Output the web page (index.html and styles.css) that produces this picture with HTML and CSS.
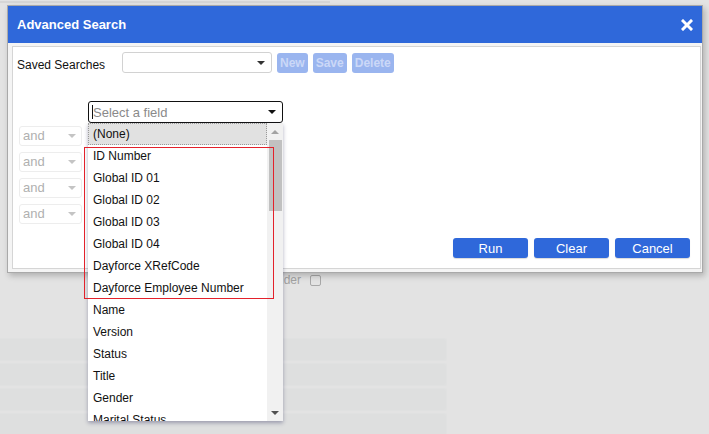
FILE: index.html
```html
<!DOCTYPE html>
<html lang="en">
<head>
    <meta charset="UTF-8">
    <title>Advanced Search</title>
    <link rel="stylesheet" href="styles.css">
</head>
<body>
    <div class="page">
        <div class="page-rule"></div>
        <div class="page-gender">
            <span>Gender</span>
            <span class="page-check"></span>
        </div>
        <div class="page-fields">
            <div class="page-field"></div>
            <div class="page-field"></div>
            <div class="page-field"></div>
            <div class="page-field"></div>
        </div>
    </div>

    <div class="modal">
        <div class="modal-title">
            <span>Advanced Search</span>
            <svg class="modal-close" width="12" height="12" viewBox="0 0 12 12">
                <path d="M2 2 L10 10 M10 2 L2 10" stroke="#fff" stroke-width="3" stroke-linecap="square"/>
            </svg>
        </div>
        <div class="modal-body">
            <div class="saved-row">
                <label class="saved-label">Saved Searches</label>
                <div class="saved-select"><span class="caret dark"></span></div>
                <button class="btn-light">New</button>
                <button class="btn-light">Save</button>
                <button class="btn-light">Delete</button>
            </div>

            <div class="field-row">
                <div class="field-wrap">
                    <div class="field-select">
                        <span class="cursor"></span>
                        <span class="placeholder">Select a field</span>
                        <span class="caret black"></span>
                    </div>
                    <div class="field-list">
                        <ul class="field-items">
                            <li class="active">(None)</li>
                            <li>ID Number</li>
                            <li>Global ID 01</li>
                            <li>Global ID 02</li>
                            <li>Global ID 03</li>
                            <li>Global ID 04</li>
                            <li>Dayforce XRefCode</li>
                            <li>Dayforce Employee Number</li>
                            <li>Name</li>
                            <li>Version</li>
                            <li>Status</li>
                            <li>Title</li>
                            <li>Gender</li>
                            <li>Marital Status</li>
                        </ul>
                        <div class="scrollbar">
                            <span class="scroll-up"></span>
                            <span class="scroll-thumb"></span>
                            <span class="scroll-track"></span>
                            <span class="scroll-down"></span>
                        </div>
                        <div class="highlight"></div>
                    </div>
                </div>
            </div>

            <div class="conditions">
                <div class="cond-select"><span>and</span><span class="caret pale"></span></div>
                <div class="cond-select"><span>and</span><span class="caret pale"></span></div>
                <div class="cond-select"><span>and</span><span class="caret pale"></span></div>
                <div class="cond-select"><span>and</span><span class="caret pale"></span></div>
            </div>

            <div class="actions">
                <button class="btn-blue">Run</button>
                <button class="btn-blue">Clear</button>
                <button class="btn-blue">Cancel</button>
            </div>
        </div>
    </div>
</body>
</html>
```

FILE: styles.css
```css
body {
    margin: 0;
    width: 709px;
    height: 434px;
    overflow: hidden;
    background-color: #e3e3e3;
    font-family: 'Liberation Sans', Arial, sans-serif;
    font-size: 12px;
    color: #111;
    position: relative;
}

/* faded page behind the dialog */
.page {
    display: flex;
    flex-direction: column;
}

.page-rule {
    margin-top: 1px;
    width: 330px;
    height: 2px;
    background-color: #d6d6d6;
}

.page-gender {
    display: flex;
    align-items: center;
    margin-top: 270px;
    padding-left: 261px;
    height: 14px;
    color: #a2a2a2;
    font-size: 12px;
}

.page-check {
    width: 9px;
    height: 9px;
    margin-left: 9px;
    border: 1px solid #a8a8a8;
    border-radius: 2px;
}

.page-fields {
    display: flex;
    flex-direction: column;
    gap: 2px;
    margin-top: 51px;
}

.page-field {
    width: 446px;
    height: 21px;
    background-color: #dedfdf;
    border: 1px solid #e0e1e1;
    border-left: none;
    border-radius: 0 3px 3px 0;
}

/* dialog */
.modal {
    position: absolute;
    left: 7px;
    top: 5px;
    width: 694px;
    height: 266px;
    border: 1px solid #a9a9a9;
    background-color: #f4f4f4;
    box-shadow: 2px 3px 6px rgba(0, 0, 0, 0.22);
    display: flex;
    flex-direction: column;
}

.modal-title {
    height: 37px;
    flex-shrink: 0;
    background-color: #2f68da;
    color: #fff;
    font-weight: bold;
    font-size: 13px;
    display: flex;
    align-items: center;
    justify-content: space-between;
    padding: 0 9px 0 9px;
}

.modal-close {
    display: block;
}

.modal-body {
    flex: 1;
    margin: 3px 1px 3px 4px;
    background-color: #fff;
    border: 1px solid #d5d5d5;
    padding: 5px 10px 10px 4px;
    display: flex;
    flex-direction: column;
}

.saved-row {
    display: flex;
    align-items: center;
    gap: 5px;
}

.saved-label {
    width: 100px;
    margin-top: 5px;
    font-size: 12px;
    color: #111;
}

.saved-select {
    position: relative;
    width: 148px;
    height: 19px;
    border: 1px solid #d2d2d2;
    border-radius: 3px;
}

.caret {
    position: absolute;
    top: 50%;
    width: 0;
    height: 0;
    margin-top: -2px;
    border-left: 4px solid transparent;
    border-right: 4px solid transparent;
    border-top: 4px solid #333;
}

.saved-select .caret {
    right: 6px;
}

.caret.black {
    border-top-color: #111;
    right: 6px;
}

.caret.pale {
    border-top-color: #c4c4c4;
    right: 5px;
}

.btn-light {
    height: 20px;
    padding: 0 3px;
    border: none;
    border-radius: 3px;
    background-color: #9ab5ef;
    color: #cbd8f7;
    font-family: 'Liberation Sans', Arial, sans-serif;
    font-weight: bold;
    font-size: 12px;
}

.field-row {
    margin-top: 28px;
    padding-left: 71px;
}

.field-wrap {
    position: relative;
    width: 195px;
}

.field-select {
    position: relative;
    height: 20px;
    border: 1px solid #111;
    border-radius: 3px;
    display: flex;
    align-items: center;
    padding-left: 3px;
}

.cursor {
    width: 1px;
    height: 14px;
    background-color: #111;
}

.placeholder {
    color: #8a8a8a;
    font-size: 13px;
}

.field-list {
    position: absolute;
    left: 0;
    top: 100%;
    z-index: 5;
    width: 195px;
    height: 298px;
    background-color: #fff;
    box-shadow: 0 2px 4px rgba(30, 30, 80, 0.35);
    display: flex;
}

.field-items {
    flex: 1;
    margin: 0;
    padding: 0;
    list-style: none;
    overflow: hidden;
}

.field-items li {
    height: 22px;
    line-height: 22px;
    padding-left: 5px;
    white-space: nowrap;
    color: #111;
}

.field-items li.active {
    background-color: #e1e1e1;
    border: 1px dotted #9a9a9a;
    line-height: 20px;
    height: 20px;
    padding-left: 4px;
}

.scrollbar {
    width: 16px;
    background-color: #f1f1f1;
    display: flex;
    flex-direction: column;
    align-items: center;
}

.scroll-up, .scroll-down {
    height: 17px;
    display: flex;
    align-items: center;
}

.scroll-up::before, .scroll-down::before {
    content: "";
    border-left: 4px solid transparent;
    border-right: 4px solid transparent;
}

.scroll-up::before {
    border-bottom: 4px solid #a3a3a3;
}

.scroll-down::before {
    border-top: 4px solid #505050;
}

.scroll-thumb {
    width: 13px;
    height: 71px;
    background-color: #c1c1c1;
}

.scroll-track {
    flex: 1;
}

.highlight {
    position: absolute;
    left: -4px;
    top: 24px;
    width: 188px;
    height: 150px;
    border: 1px solid #e3212b;
    pointer-events: none;
}

.conditions {
    display: flex;
    flex-direction: column;
    gap: 6px;
    margin-top: 3px;
    padding-left: 2px;
}

.cond-select {
    position: relative;
    height: 20px;
    box-sizing: border-box;
    border: 1px solid #ededed;
    border-radius: 3px;
    color: #b0b0b0;
    font-size: 13px;
    line-height: 18px;
    padding-left: 3px;
    width: 63px;
}

.actions {
    margin-top: auto;
    display: flex;
    justify-content: flex-end;
    gap: 6px;
}

.btn-blue {
    width: 75px;
    height: 20px;
    border: none;
    border-radius: 3px;
    background-color: #2f68da;
    color: #fff;
    font-family: 'Liberation Sans', Arial, sans-serif;
    font-size: 13px;
    box-shadow: 0 1px 1px rgba(0, 0, 0, 0.15);
}
```
